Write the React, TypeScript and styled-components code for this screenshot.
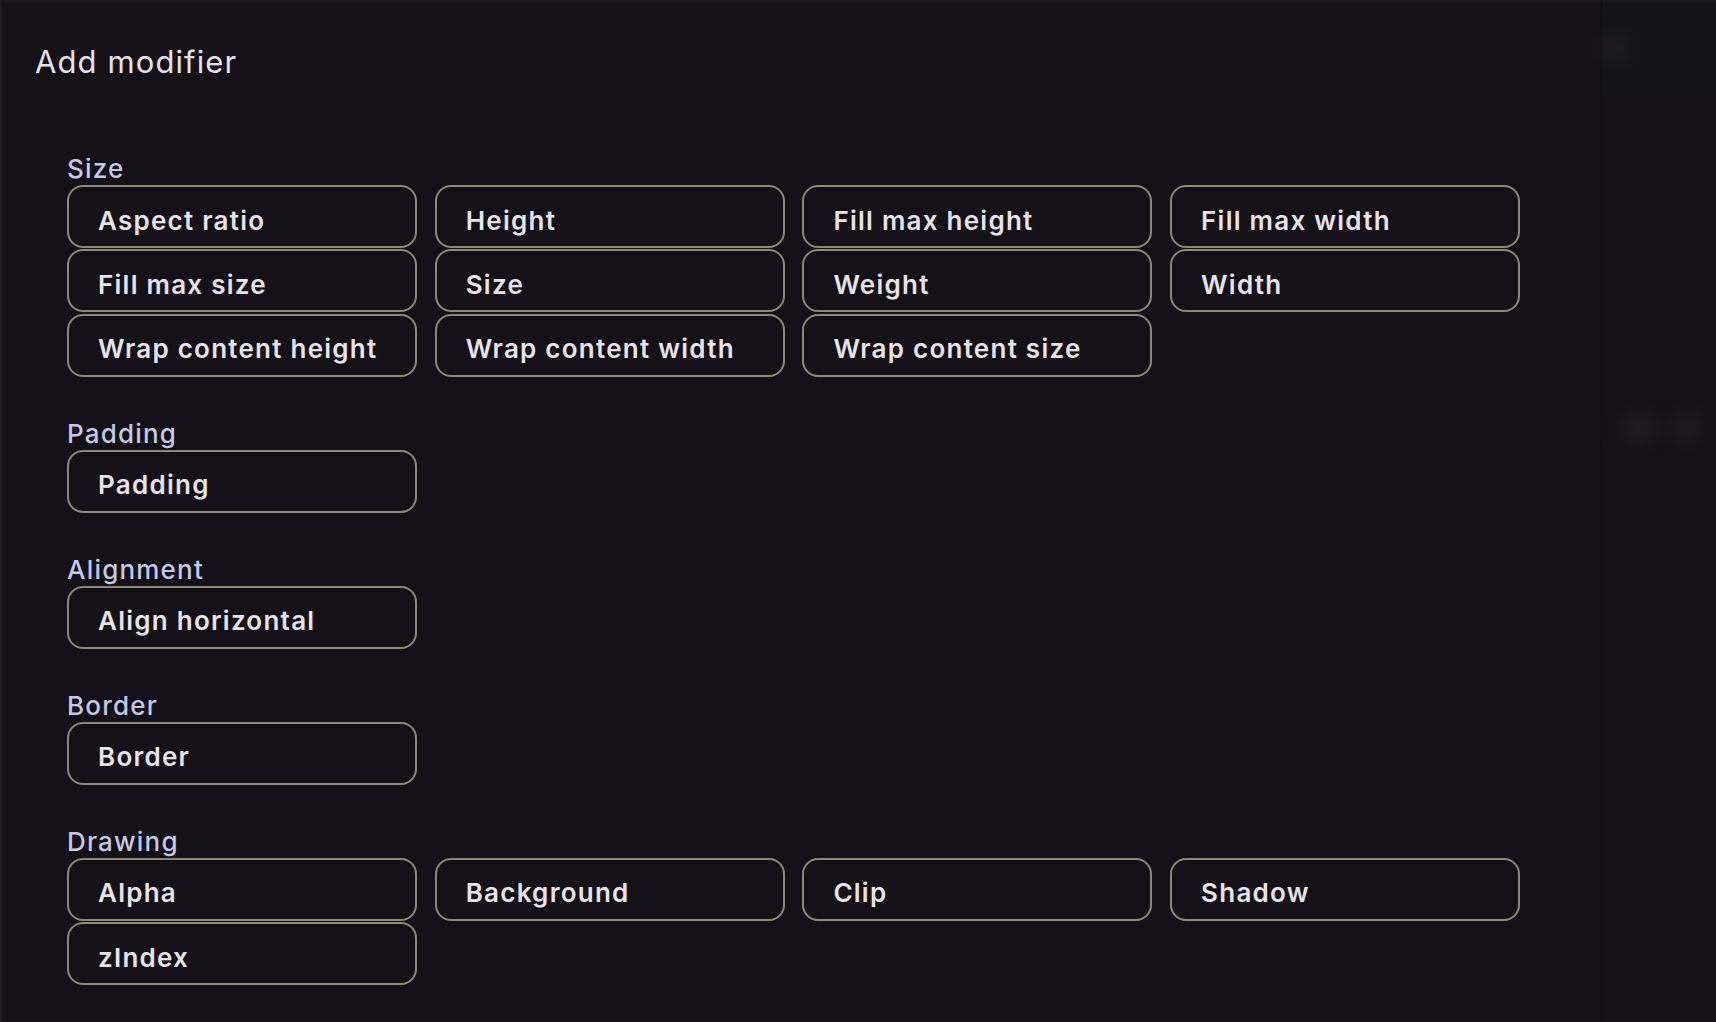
import React from "react";
import styled, { createGlobalStyle } from "styled-components";

const sections = [
  {
    title: "Size",
    items: [
      "Aspect ratio",
      "Height",
      "Fill max height",
      "Fill max width",
      "Fill max size",
      "Size",
      "Weight",
      "Width",
      "Wrap content height",
      "Wrap content width",
      "Wrap content size",
    ],
  },
  { title: "Padding", items: ["Padding"] },
  { title: "Alignment", items: ["Align horizontal"] },
  { title: "Border", items: ["Border"] },
  { title: "Drawing", items: ["Alpha", "Background", "Clip", "Shadow", "zIndex"] },
];

const App = () => {
  return (
    <>
      <Global />
      <Screen>
        <Dialog>
          <Title>Add modifier</Title>
          <Body>
            {sections.map((s) => (
              <Section key={s.title}>
                <Label>{s.title}</Label>
                <Grid>
                  {s.items.map((it) => (
                    <Chip key={it}>{it}</Chip>
                  ))}
                </Grid>
              </Section>
            ))}
          </Body>
        </Dialog>
        <Side>
          <SideTop>
            <Blur $size={26} />
          </SideTop>
          <SideIcons>
            <Blur $size={30} />
            <Blur $size={26} />
          </SideIcons>
        </Side>
      </Screen>
    </>
  );
};

export default App;

const Global = createGlobalStyle`
body {
    margin: 0;
    background-color: #141218;
    font-family: Inter, "Noto Sans", sans-serif;
}
`;

const Screen = styled.div`
display: flex;
width: 100%;
height: 1022px;
overflow: hidden;
background-color: #141218;
`;

const Dialog = styled.div`
width: 1602px;
flex-shrink: 0;
box-sizing: border-box;
border-top: 2px solid #1d1b21;
border-left: 2px solid #1d1b21;
border-right: 1px solid #0e0d11;
padding: 41px 0 0 33px;
background-color: #141218;
`;

const Title = styled.div`
font-size: 31px;
font-weight: 400;
color: #e6e1e9;
letter-spacing: 1.1px;
`;

const Body = styled.div`
margin-top: 73px;
margin-left: 32px;
display: flex;
flex-direction: column;
gap: 41px;
`;

const Section = styled.div`
display: flex;
flex-direction: column;
`;

const Label = styled.div`
font-size: 26px;
font-weight: 500;
color: #c5c8e6;
line-height: 32px;
letter-spacing: 1.2px;
`;

const Grid = styled.div`
display: grid;
grid-template-columns: repeat(4, 350px);
column-gap: 17.7px;
row-gap: 1.4px;
`;

const Chip = styled.div`
box-sizing: border-box;
height: 63px;
border: 2px solid #8c8979;
border-radius: 16px;
padding: 7px 0 0 29px;
display: flex;
align-items: center;
font-size: 26px;
font-weight: 600;
letter-spacing: 1.25px;
color: #e8e3ea;
`;

const Side = styled.div`
flex: 1;
display: flex;
flex-direction: column;
background-color: #141217;
border-top: 2px solid #1a181e;
`;

const SideTop = styled.div`
height: 91px;
border-bottom: 1px solid #17151b;
background-color: #15131a;
display: flex;
align-items: center;
`;

const SideIcons = styled.div`
margin-top: 320px;
display: flex;
gap: 20px;
padding-left: 22px;
`;

const Blur = styled.div<{ $size: number }>`
width: ${(p) => p.$size}px;
height: ${(p) => p.$size}px;
border-radius: 50%;
background-color: #2a282e;
filter: blur(10px);
opacity: 0.7;
`;
